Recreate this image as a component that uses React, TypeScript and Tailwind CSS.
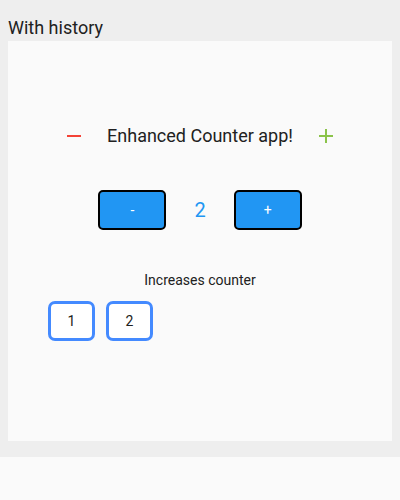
function HistoryItem({ value }: { value: number }) {
  return (
    <div className="w-[47px] h-10 flex items-center justify-center bg-white border-[3px] border-[#448aff] rounded-[7px] text-sm text-[#212121]">
      {value}
    </div>
  );
}

export default function App() {
  const history = [1, 2];

  return (
    <div className="min-h-screen bg-[#fafafa] font-['Roboto',sans-serif]">
      <div className="bg-[#eeeeee] px-2 pb-4">
        <h2 className="pt-4 h-[41px] text-[18px] leading-6 text-[#212121]">With history</h2>

        <div className="bg-[#fafafa] h-[400px] flex flex-col">
          <div className="mt-[83px] h-6 flex items-center justify-center gap-[26px]">
            <svg width="14" height="24" viewBox="0 0 14 24">
              <rect x="0" y="11" width="14" height="2" fill="#f44336" />
            </svg>
            <p className="text-[18px] leading-6 text-[#212121]">Enhanced Counter app!</p>
            <svg width="14" height="24" viewBox="0 0 14 24">
              <rect x="0" y="11" width="14" height="2" fill="#8bc34a" />
              <rect x="6" y="5" width="2" height="14" fill="#8bc34a" />
            </svg>
          </div>

          <div className="mt-[42px] flex items-center justify-center gap-7">
            <button className="w-[68px] h-10 bg-[#2196f3] border-2 border-black rounded-[5px] text-white text-sm">-</button>
            <span className="text-xl text-[#2196f3]">2</span>
            <button className="w-[68px] h-10 bg-[#2196f3] border-2 border-black rounded-[5px] text-white text-sm">+</button>
          </div>

          <p className="mt-10 text-sm leading-5 text-center text-[#212121]">Increases counter</p>

          <div className="mt-[11px] px-10 flex gap-[11px]">
            {history.map((h) => (
              <HistoryItem key={h} value={h} />
            ))}
          </div>
        </div>
      </div>
    </div>
  );
}
